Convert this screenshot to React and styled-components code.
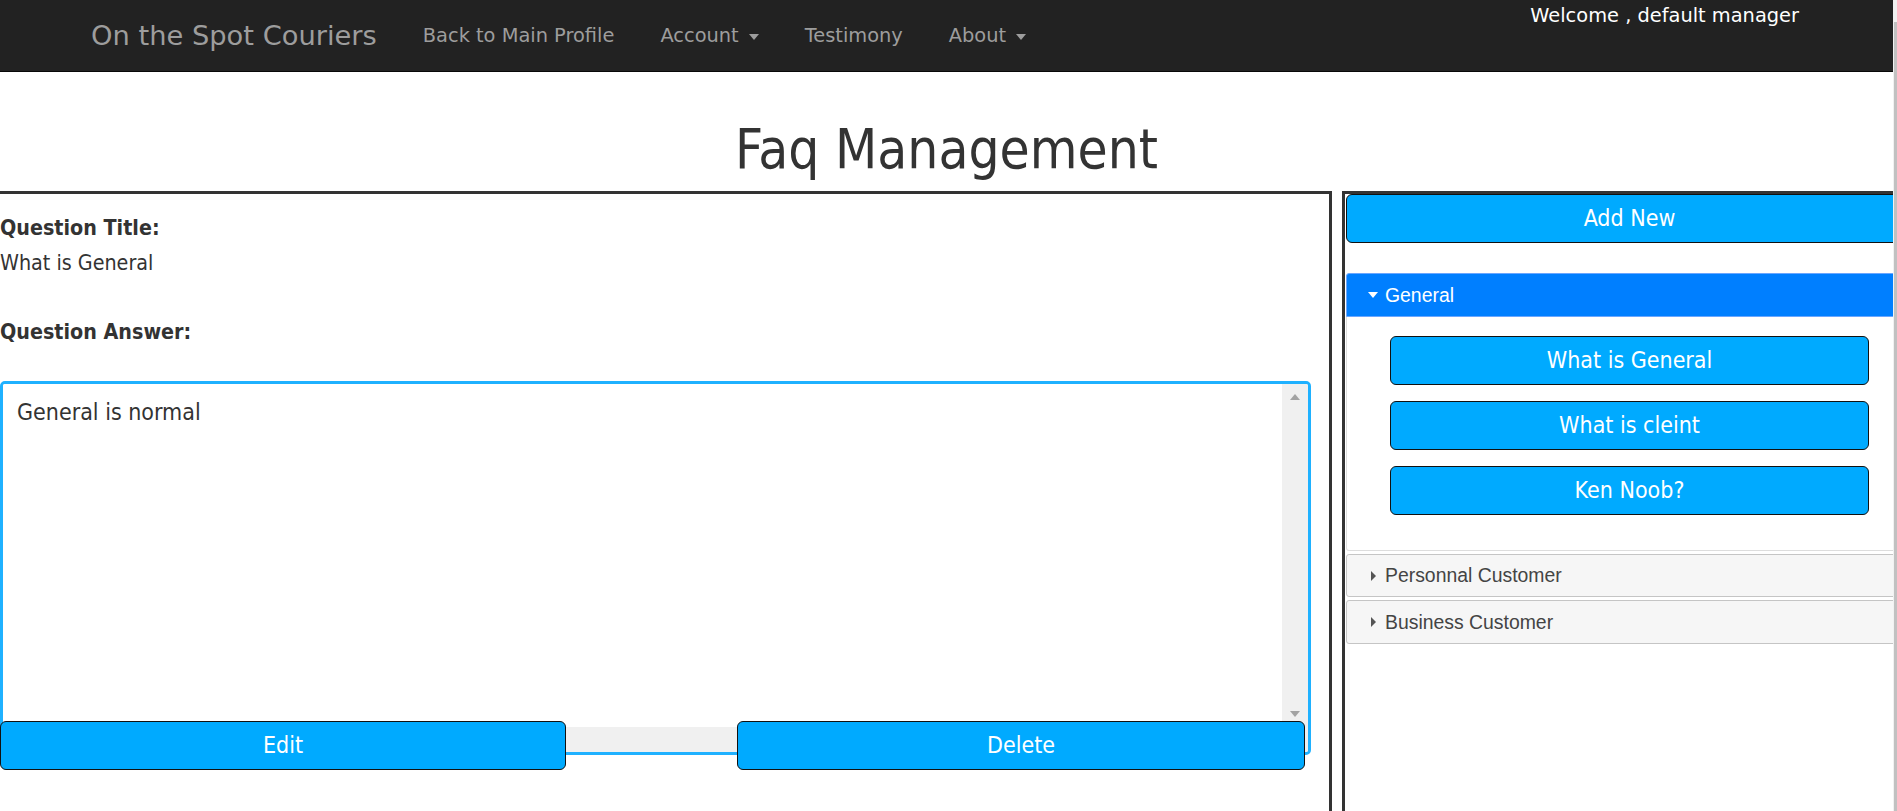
import React from "react"
import styled, { createGlobalStyle } from "styled-components"

const GlobalStyle = createGlobalStyle`
  html, body {
    margin: 0;
    padding: 0;
    height: 100%;
    overflow: hidden;
  }
  body {
    font-family: "DejaVu Sans", Verdana, sans-serif;
    color: #333;
    background: #fff;
  }
  * {
    box-sizing: border-box;
  }
`

const condensed = `
  font-family: "DejaVu Sans Condensed", "DejaVu Sans", Tahoma, sans-serif;
  font-stretch: condensed;
`

const Shell = styled.div`
  display: flex;
  height: 100vh;
`

const Page = styled.div`
  flex: 1;
  min-width: 0;
  display: flex;
  flex-direction: column;
  overflow: hidden;
`

const WindowScroll = styled.div`
  width: 4px;
  flex-shrink: 0;
  background: #f1f1f1;
  display: flex;
  flex-direction: column;
  &::after {
    content: "";
    flex: 1;
    margin: 22px 0 0 1px;
    background: #c1c1c1;
  }
`

const NavBar = styled.nav`
  flex-shrink: 0;
  height: 72px;
  background: #222;
  border-bottom: 1px solid #080808;
  display: flex;
  align-items: center;
  padding: 0 94px 0 91px;
  font-family: "DejaVu Sans", Verdana, sans-serif;
`

const Brand = styled.a`
  font-size: 27.3px;
  color: #9d9d9d;
  text-decoration: none;
  margin-right: 23px;
  white-space: nowrap;
`

const NavLink = styled.a`
  display: flex;
  align-items: center;
  padding: 0 23px;
  font-size: 19.4px;
  color: #9d9d9d;
  text-decoration: none;
  white-space: nowrap;
`

const Caret = styled.span`
  margin: 2px 0 0 10px;
  border-top: 6px solid #9d9d9d;
  border-left: 5px solid transparent;
  border-right: 5px solid transparent;
`

const Welcome = styled.p`
  align-self: flex-start;
  margin: 4px 0 0 auto;
  font-size: 19.4px;
  color: #fff;
  white-space: nowrap;
`

const Title = styled.h1`
  margin: 48px 0 12px;
  text-align: center;
  ${condensed}
  font-size: 54.5px;
  font-weight: 400;
  line-height: 59px;
  color: #333;
`

const Workspace = styled.div`
  flex: 1;
  min-height: 0;
  display: flex;
  gap: 10px;
`

const EditorPanel = styled.section`
  flex-shrink: 0;
  width: 1332px;
  padding-top: 16px;
  border-top: 3px solid #333;
  border-right: 3px solid #333;
  ${condensed}
  font-size: 21.3px;
  line-height: 35px;
`

const FieldLabel = styled.div`
  font-weight: 700;
  margin-top: ${({ $gap }) => $gap || 0}px;
`

const FieldValue = styled.div`
  font-weight: 400;
`

const AnswerBox = styled.div`
  margin-top: 32px;
  width: 1311px;
  height: 374px;
  border: 3px solid #1fb1ff;
  border-radius: 5px;
  display: grid;
  grid-template-columns: 1fr 26px;
  grid-template-rows: 1fr 25px;
  overflow: hidden;
`

const AnswerInput = styled.textarea`
  border: 0;
  outline: none;
  resize: none;
  overflow: hidden;
  padding: 15px 14px;
  ${condensed}
  font-size: 23px;
  line-height: normal;
  color: #333;
  background: #fff;
`

const ScrollTrack = styled.div`
  background: #f0f0f0;
  display: flex;
  flex-direction: column;
  justify-content: space-between;
  align-items: center;
  padding: 10px 0;
`

const ScrollArrow = styled.span`
  width: 0;
  height: 0;
  border-left: 5px solid transparent;
  border-right: 5px solid transparent;
  ${({ $down }) =>
    $down ? "border-top: 6px solid #a3a3a3;" : "border-bottom: 6px solid #a3a3a3;"}
`

const ScrollCorner = styled.div`
  grid-column: 1 / -1;
  background: #f0f0f0;
`

const ButtonRow = styled.div`
  position: relative;
  width: 1305px;
  margin-top: -34px;
  display: flex;
  justify-content: space-between;
`

const ActionButton = styled.button`
  width: ${({ $width }) => ($width ? `${$width}px` : "100%")};
  height: 49px;
  padding: 0;
  background: #00aaff;
  border: 1px solid #111;
  border-radius: 6px;
  color: #fff;
  ${condensed}
  font-size: 23px;
  line-height: 1;
  cursor: pointer;
`

const SidePanel = styled.aside`
  flex-shrink: 0;
  width: 571px;
  padding-left: 1px;
  border-top: 3px solid #333;
  border-left: 3px solid #333;
`

const Accordion = styled.div`
  margin-top: 30px;
  font-family: "Liberation Sans", Arial, sans-serif;
  font-size: 19.4px;
`

const AccordionHeader = styled.div`
  display: flex;
  align-items: center;
  margin-top: ${({ $first }) => ($first ? 0 : 3)}px;
  padding: 9.5px 10px 9px 21px;
  border: 1px solid ${({ $active }) => ($active ? "#6aa6ff" : "#c5c5c5")};
  border-radius: ${({ $active }) => ($active ? "3px 3px 0 0" : "3px")};
  background: ${({ $active }) => ($active ? "#007fff" : "#f6f6f6")};
  color: ${({ $active }) => ($active ? "#fff" : "#444")};
  line-height: normal;
  cursor: pointer;
`

const HeaderIcon = styled.span`
  width: 10px;
  margin-right: 7px;
  display: flex;
  justify-content: ${({ $open }) => ($open ? "flex-start" : "center")};
  &::before {
    content: "";
    width: 0;
    height: 0;
    ${({ $open }) =>
      $open
        ? `border-top: 6px solid #fff;
           border-left: 5px solid transparent;
           border-right: 5px solid transparent;`
        : `border-left: 5px solid #555;
           border-top: 5px solid transparent;
           border-bottom: 5px solid transparent;`}
  }
`

const AccordionBody = styled.div`
  display: flex;
  flex-direction: column;
  gap: 16px;
  padding: 19px 43px 35px;
  border: 1px solid #ddd;
  border-top: 0;
  border-radius: 0 0 3px 3px;
`

const sections = [
  { name: "General", questions: ["What is General", "What is cleint", "Ken Noob?"] },
  { name: "Personnal Customer", questions: [] },
  { name: "Business Customer", questions: [] }
]

export default function App() {
  const [open, setOpen] = React.useState(0)
  return (
    <Shell>
      <GlobalStyle />
      <Page>
        <NavBar>
          <Brand href="#">On the Spot Couriers</Brand>
          <NavLink href="#">Back to Main Profile</NavLink>
          <NavLink href="#">
            Account <Caret />
          </NavLink>
          <NavLink href="#">Testimony</NavLink>
          <NavLink href="#">
            About <Caret />
          </NavLink>
          <Welcome>Welcome , default manager</Welcome>
        </NavBar>
        <Title>Faq Management</Title>
        <Workspace>
          <EditorPanel>
            <FieldLabel>Question Title:</FieldLabel>
            <FieldValue>What is General</FieldValue>
            <FieldLabel $gap={34}>Question Answer:</FieldLabel>
            <AnswerBox>
              <AnswerInput defaultValue="General is normal" />
              <ScrollTrack>
                <ScrollArrow />
                <ScrollArrow $down />
              </ScrollTrack>
              <ScrollCorner />
            </AnswerBox>
            <ButtonRow>
              <ActionButton $width={566}>Edit</ActionButton>
              <ActionButton $width={568}>Delete</ActionButton>
            </ButtonRow>
          </EditorPanel>
          <SidePanel>
            <ActionButton>Add New</ActionButton>
            <Accordion>
              {sections.map((s, i) => (
                <React.Fragment key={s.name}>
                  <AccordionHeader
                    $first={i === 0}
                    $active={open === i}
                    onClick={() => setOpen(i)}
                  >
                    <HeaderIcon $open={open === i} />
                    {s.name}
                  </AccordionHeader>
                  {open === i && (
                    <AccordionBody>
                      {s.questions.map(q => (
                        <ActionButton key={q}>{q}</ActionButton>
                      ))}
                    </AccordionBody>
                  )}
                </React.Fragment>
              ))}
            </Accordion>
          </SidePanel>
        </Workspace>
      </Page>
      <WindowScroll />
    </Shell>
  )
}
